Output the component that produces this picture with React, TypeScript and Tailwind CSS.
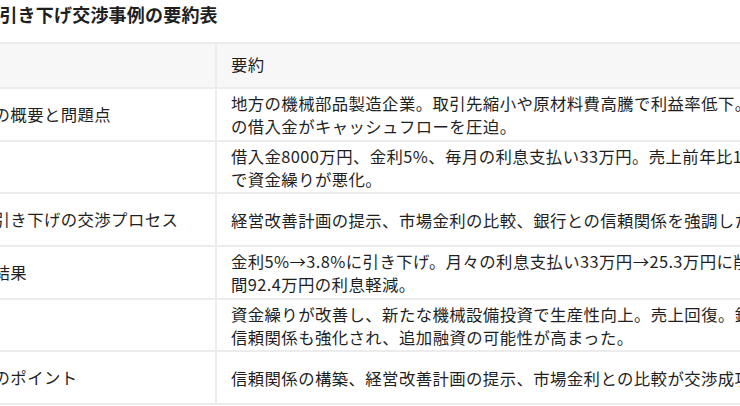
import React from "react";

const rows: { label: string; lines: string[] }[] = [
  {
    label: "事例の概要と問題点",
    lines: [
      "地方の機械部品製造企業。取引先縮小や原材料費高騰で利益率低下。1億円",
      "の借入金がキャッシュフローを圧迫。",
    ],
  },
  {
    label: "状況",
    lines: [
      "借入金8000万円、金利5%、毎月の利息支払い33万円。売上前年比10%減少",
      "で資金繰りが悪化。",
    ],
  },
  {
    label: "金利引き下げの交渉プロセス",
    lines: ["経営改善計画の提示、市場金利の比較、銀行との信頼関係を強調した交渉を実施。"],
  },
  {
    label: "交渉結果",
    lines: [
      "金利5%→3.8%に引き下げ。月々の利息支払い33万円→25.3万円に削減。年",
      "間92.4万円の利息軽減。",
    ],
  },
  {
    label: "効果",
    lines: [
      "資金繰りが改善し、新たな機械設備投資で生産性向上。売上回復。銀行との",
      "信頼関係も強化され、追加融資の可能性が高まった。",
    ],
  },
  {
    label: "成功のポイント",
    lines: ["信頼関係の構築、経営改善計画の提示、市場金利との比較が交渉成功の鍵となった。"],
  },
];

export default function App() {
  return (
    <div
      className="w-[740px] h-[406px] overflow-hidden bg-white text-[#1f1f1f]"
      style={{ fontFamily: '"Noto Sans CJK JP", "Noto Sans", sans-serif' }}
    >
      <div className="ml-[-52px] w-[1200px]">
        <h2 className="pl-[15px] pt-[1px] h-[42px] text-[18px] leading-[26px] font-bold tracking-[0.2px]">
          金利引き下げ交渉事例の要約表
        </h2>
        <div className="border-t-2 border-[#ececec]">
          <div className="flex h-[45px] bg-[#f7f7f7] border-b-2 border-[#ececec]">
            <div className="w-[269px] shrink-0 border-r-2 border-[#ececec]" />
            <div className="flex items-center pl-[14px] pb-[2px] text-[16.4px] tracking-[0.4px]">要約</div>
          </div>
          {rows.map((r) => (
            <div
              key={r.label}
              className="flex h-[52.7px] border-b-2 border-[#ececec] text-[16.4px] leading-[23px] tracking-[0.4px]"
            >
              <div className="w-[269px] shrink-0 border-r-2 border-[#ececec] flex items-center pl-[12px] whitespace-nowrap">
                {r.label}
              </div>
              <div className="flex flex-col justify-center pl-[14px] pt-[2px] whitespace-nowrap">
                {r.lines.map((l, i) => (
                  <span key={i}>{l}</span>
                ))}
              </div>
            </div>
          ))}
        </div>
      </div>
    </div>
  );
}
